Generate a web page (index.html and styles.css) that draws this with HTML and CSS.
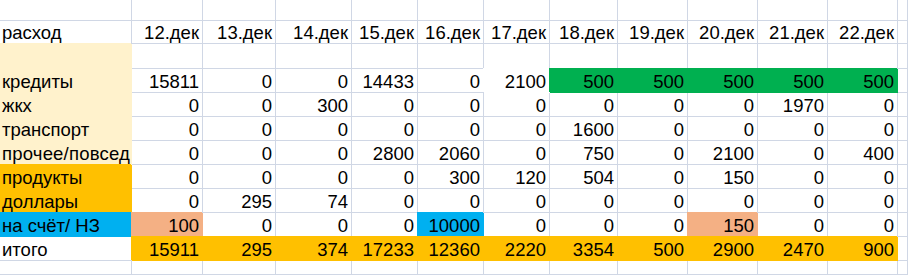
FILE: index.html
```html
<!DOCTYPE html>
<html lang="ru">
<head>
<meta charset="utf-8">
<title>расход</title>
<link rel="stylesheet" href="styles.css">
</head>
<body>
<div class="sheet">
  <!-- row 0 -->
  <div class="c"></div><div class="c"></div><div class="c"></div><div class="c"></div><div class="c"></div><div class="c"></div><div class="c"></div><div class="c"></div><div class="c"></div><div class="c"></div><div class="c"></div><div class="c"></div><div class="c"></div>
  <!-- row 1 header -->
  <div class="c t">расход</div><div class="c n">12.дек</div><div class="c n">13.дек</div><div class="c n">14.дек</div><div class="c n">15.дек</div><div class="c n">16.дек</div><div class="c n">17.дек</div><div class="c n">18.дек</div><div class="c n">19.дек</div><div class="c n">20.дек</div><div class="c n">21.дек</div><div class="c n">22.дек</div><div class="c"></div>
  <!-- row 2 -->
  <div class="c t cream"></div><div class="c"></div><div class="c"></div><div class="c"></div><div class="c"></div><div class="c"></div><div class="c"></div><div class="c"></div><div class="c"></div><div class="c"></div><div class="c"></div><div class="c"></div><div class="c"></div>
  <!-- кредиты -->
  <div class="c t cream">кредиты</div><div class="c n">15811</div><div class="c n">0</div><div class="c n">0</div><div class="c n">14433</div><div class="c n">0</div><div class="c n white">2100</div><div class="c n green">500</div><div class="c n green">500</div><div class="c n green">500</div><div class="c n green">500</div><div class="c n green">500</div><div class="c"></div>
  <!-- жкх -->
  <div class="c t cream">жкх</div><div class="c n">0</div><div class="c n">0</div><div class="c n">300</div><div class="c n">0</div><div class="c n">0</div><div class="c n">0</div><div class="c n">0</div><div class="c n">0</div><div class="c n">0</div><div class="c n">1970</div><div class="c n">0</div><div class="c"></div>
  <!-- транспорт -->
  <div class="c t cream">транспорт</div><div class="c n">0</div><div class="c n">0</div><div class="c n">0</div><div class="c n">0</div><div class="c n">0</div><div class="c n">0</div><div class="c n">1600</div><div class="c n">0</div><div class="c n">0</div><div class="c n">0</div><div class="c n">0</div><div class="c"></div>
  <!-- прочее -->
  <div class="c t cream wide">прочее/повсед</div><div class="c n">0</div><div class="c n">0</div><div class="c n">0</div><div class="c n">2800</div><div class="c n">2060</div><div class="c n">0</div><div class="c n">750</div><div class="c n">0</div><div class="c n">2100</div><div class="c n">0</div><div class="c n">400</div><div class="c"></div>
  <!-- продукты -->
  <div class="c t orange">продукты</div><div class="c n">0</div><div class="c n">0</div><div class="c n">0</div><div class="c n">0</div><div class="c n">300</div><div class="c n">120</div><div class="c n">504</div><div class="c n">0</div><div class="c n">150</div><div class="c n">0</div><div class="c n">0</div><div class="c"></div>
  <!-- доллары -->
  <div class="c t orange">доллары</div><div class="c n">0</div><div class="c n">295</div><div class="c n">74</div><div class="c n">0</div><div class="c n">0</div><div class="c n">0</div><div class="c n">0</div><div class="c n">0</div><div class="c n">0</div><div class="c n">0</div><div class="c n">0</div><div class="c"></div>
  <!-- на счёт -->
  <div class="c t blue">на счёт/ НЗ</div><div class="c n salmon">100</div><div class="c n">0</div><div class="c n">0</div><div class="c n">0</div><div class="c n blue">10000</div><div class="c n">0</div><div class="c n">0</div><div class="c n">0</div><div class="c n salmon">150</div><div class="c n">0</div><div class="c n">0</div><div class="c"></div>
  <!-- итого -->
  <div class="c t">итого</div><div class="c n orange">15911</div><div class="c n orange">295</div><div class="c n orange">374</div><div class="c n orange">17233</div><div class="c n orange">12360</div><div class="c n orange">2220</div><div class="c n orange">3354</div><div class="c n orange">500</div><div class="c n orange">2900</div><div class="c n orange">2470</div><div class="c n orange">900</div><div class="c"></div>
  <!-- last row -->
  <div class="c"></div><div class="c"></div><div class="c"></div><div class="c"></div><div class="c"></div><div class="c"></div><div class="c"></div><div class="c"></div><div class="c"></div><div class="c"></div><div class="c"></div><div class="c"></div><div class="c"></div>
</div>
</body>
</html>
```
FILE: styles.css
```css
html, body {
  margin: 0;
  padding: 0;
  background: #ffffff;
  overflow: hidden;
}

.sheet {
  display: grid;
  width: 908px;
  height: 275px;
  grid-template-columns: 132px 71px 73px 76px 66px 66px 66px 68px 70px 70px 70px 70px 1fr;
  grid-template-rows: 21px 23px 25px repeat(8, 24px) 1fr;
  font-family: "Liberation Sans", Arial, sans-serif;
  font-size: 18.5px;
  color: #000;
  overflow: hidden;
}

.c {
  box-sizing: border-box;
  border-right: 1px solid #d0d7e5;
  border-bottom: 1px solid #d0d7e5;
  display: flex;
  align-items: flex-end;
  line-height: 21px;
  white-space: nowrap;
  overflow: hidden;
  min-width: 0;
}

.t {
  padding-left: 2px;
  justify-content: flex-start;
}

.wide {
  letter-spacing: 0.2px;
}

.n {
  padding-right: 3px;
  justify-content: flex-end;
}

.cream {
  background: #fff2cc;
  border-color: #fff2cc;
  box-shadow: -1px -1px 0 0 #fff2cc;
}

.orange {
  background: #ffc000;
  border-color: #ffc000;
  box-shadow: -1px -1px 0 0 #ffc000;
}

.green {
  background: #00b050;
  border-color: #00b050;
  box-shadow: -1px -1px 0 0 #00b050;
}

.blue {
  background: #00b0f0;
  border-color: #00b0f0;
  box-shadow: -1px -1px 0 0 #00b0f0;
}

.salmon {
  background: #f4b084;
  border-color: #f4b084;
  box-shadow: -1px -1px 0 0 #f4b084;
}

.white {
  background: #ffffff;
  border-color: #ffffff;
  box-shadow: -1px -1px 0 0 #ffffff;
}
```
